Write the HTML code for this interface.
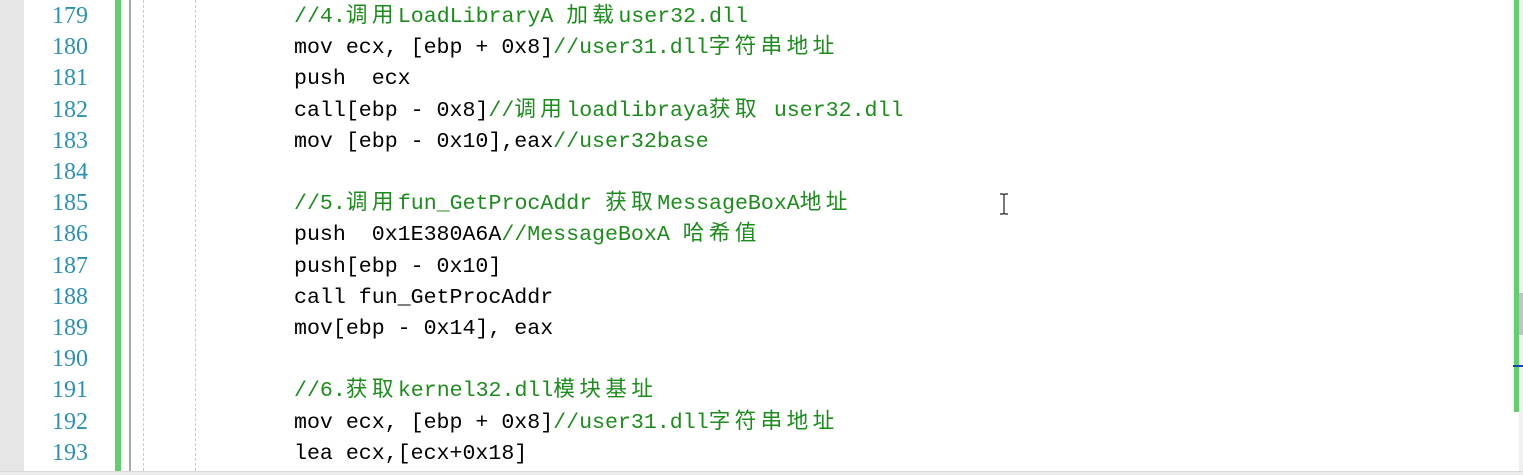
<!DOCTYPE html>
<html><head><meta charset="utf-8"><style>
html,body{margin:0;padding:0;width:1523px;height:475px;overflow:hidden;background:#fff;position:relative}
.l{position:absolute;left:0;width:24px;top:0;height:471px;background:#e6e6e6}
.gb{position:absolute;left:115px;width:6px;top:0;height:471px;background:#63cf6c}
.sep{position:absolute;left:129px;width:2px;top:0;height:471px;background:#a8a8a8}
.d{position:absolute;top:0;height:471px;border-left:1px dashed #c8c8c8}
.n{position:absolute;left:30px;width:58px;text-align:right;font:24px "Liberation Serif",serif;color:#2b91af;line-height:31.2px}
.t{position:absolute;left:294px;font:21.6px "Liberation Mono","Noto Sans CJK SC",monospace;color:#000;line-height:31.2px;white-space:pre}
.g{color:#1c8c1c}
.c{letter-spacing:4.4px}
.bot{position:absolute;left:0;top:471px;width:1523px;height:4px;background:#ececec;border-top:1px solid #d8d8d8}
.rg{position:absolute;left:1514px;width:5px;top:0;height:412px;background:#63cf6c}
.sb{position:absolute;left:1519px;width:4px;top:0;height:471px;background:#f0f0f0}
.th{position:absolute;left:1519px;width:4px;top:293px;height:42px;background:#c2c2c8}
.bl{position:absolute;left:1513px;width:10px;top:365px;height:2px;background:#1a3fbf}
</style></head><body>
<div class="l"></div>
<div class="gb"></div>
<div class="sep"></div>
<div class="d" style="left:143px"></div>
<div class="d" style="left:195px"></div>
<div class="n" style="top:1px">179<br>180<br>181<br>182<br>183<br>184<br>185<br>186<br>187<br>188<br>189<br>190<br>191<br>192<br>193</div>
<div class="t" style="top:2px"><span class="g">//4.<span class="c">调用</span>LoadLibraryA <span class="c">加载</span>user32.dll</span>
mov ecx, [ebp + 0x8]<span class="g">//user31.dll<span class="c">字符串地址</span></span>
push  ecx
call[ebp - 0x8]<span class="g">//<span class="c">调用</span>loadlibraya<span class="c">获取</span> user32.dll</span>
mov [ebp - 0x10],eax<span class="g">//user32base</span>

<span class="g">//5.<span class="c">调用</span>fun_GetProcAddr <span class="c">获取</span>MessageBoxA<span class="c">地址</span></span>
push  0x1E380A6A<span class="g">//MessageBoxA <span class="c">哈希值</span></span>
push[ebp - 0x10]
call fun_GetProcAddr
mov[ebp - 0x14], eax

<span class="g">//6.<span class="c">获取</span>kernel32.dll<span class="c">模块基址</span></span>
mov ecx, [ebp + 0x8]<span class="g">//user31.dll<span class="c">字符串地址</span></span>
lea ecx,[ecx+0x18]</div>
<svg style="position:absolute;left:998px;top:193px" width="12" height="22"><path d="M2 1h3l1 1 1-1h3M6 2v18M2 21h3l1-1 1 1h3" stroke="#222" stroke-width="1.2" fill="none"/></svg>
<div class="rg"></div>
<div class="sb"></div>
<div class="th"></div>
<div class="bl"></div>
<div class="bot"></div>
</body></html>
